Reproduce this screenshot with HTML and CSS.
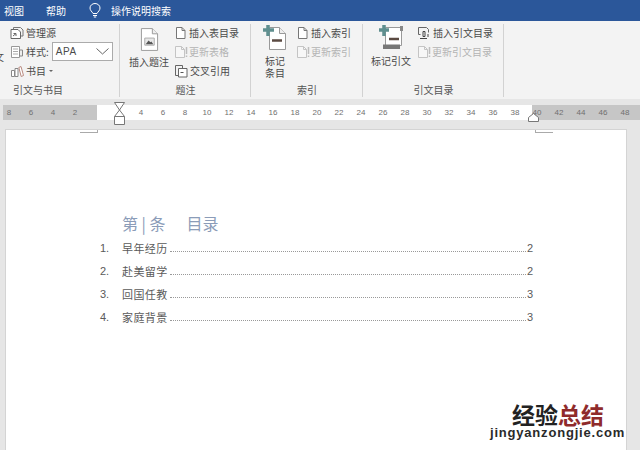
FILE: index.html
```html
<!DOCTYPE html>
<html lang="zh-CN">
<head>
    <meta charset="UTF-8">
    <title>目录</title>
    <link rel="stylesheet" href="styles.css">
</head>
<body>
    <svg class="defs" width="0" height="0">
        <symbol id="doc" viewBox="0 0 13 14">
            <path d="M2.500 1.500h5.500l3 3v8h-8.500z" fill="#fff" stroke="#777"/>
            <path d="M8 1.500v3h3" fill="none" stroke="#777"/>
        </symbol>
        <symbol id="doc-off" viewBox="0 0 14 14">
            <path d="M1.500 1.500h6l3 3v8h-9z" fill="#f7f7f7" stroke="#c4c4c4"/>
            <path d="M7.500 1.500v3h3" fill="none" stroke="#c4c4c4"/>
            <path d="M12.500 2v7M12.500 10.500v1.500" stroke="#bdbdbd" stroke-width="1.500"/>
        </symbol>
    </svg>

    <div class="titlebar">
        <span class="tab">视图</span>
        <span class="tab">帮助</span>
        <svg class="bulb" width="12" height="15" viewBox="0 0 12 15">
            <path d="M4 10.500C3 8.500 1 7.500 1 5a5 4.500 0 0 1 10 0c0 2.500-2 3.500-3 5.500z" fill="none" stroke="#fff"/>
            <path d="M4 12.500h4M4.800 14h2.400" stroke="#fff"/>
        </svg>
        <span class="search">操作说明搜索</span>
    </div>

    <div class="ribbon">
        <div class="group group-books">
            <div class="group-body">
                <span class="cut">文</span>
                <div class="col">
                    <div class="item">
                        <svg class="ic" width="14" height="14" viewBox="0 0 14 14">
                            <path d="M3.500 3.500v-2h7l2.500 2.500v6h-2" fill="none" stroke="#777"/>
                            <path d="M1 3.500h7l2.500 2.500v6.500H1z" fill="#fff" stroke="#666"/>
                            <path d="M3 10l3-2.500M6 10V7.500H3.500" fill="none" stroke="#666"/>
                        </svg>
                        管理源
                    </div>
                    <div class="item">
                        <svg class="ic" width="14" height="14" viewBox="0 0 14 14">
                            <path d="M1.500 1.500h8v11h-8z" fill="#fff" stroke="#999"/>
                            <path d="M3 4h5M3 6.500h5M3 9h5" stroke="#aaa"/>
                            <path d="M9.500 5h3v6h-3z" fill="#eee" stroke="#888"/>
                        </svg>
                        样式:
                        <div class="select">
                            <span>APA</span>
                            <svg width="13" height="7" viewBox="0 0 13 7"><path d="M.5.500l6 5.500 6-5.500" fill="none" stroke="#666"/></svg>
                        </div>
                    </div>
                    <div class="item">
                        <svg class="ic" width="14" height="14" viewBox="0 0 14 14">
                            <path d="M1.500 6.500h3v6h-3zM5 4.500h3v8H5z" fill="#fff" stroke="#888"/>
                            <path d="M8.800 3.500l2.200-1 2.500 9-2.300 1z" fill="#fff" stroke="#b98a80"/>
                        </svg>
                        书目
                        <span class="caret"></span>
                    </div>
                </div>
            </div>
            <div class="group-label">引文与书目</div>
        </div>

        <div class="group group-caption">
            <div class="group-body">
                <div class="big big-caption">
                    <svg width="19" height="25" viewBox="0 0 20 26">
                        <path d="M1.500 1.500h11.500l5.500 5.500v17.500h-17z" fill="#fff" stroke="#999"/>
                        <path d="M13 1.500V7h5.500" fill="#eee" stroke="#999"/>
                        <path d="M5 11.500h10v7.500H5z" fill="#e8e8e8" stroke="#aaa"/>
                        <path d="M6 18l3-4 2 2 1-1 2 3z" fill="#555"/>
                    </svg>
                    <span class="big-text">插入题注</span>
                </div>
                <div class="col">
                    <div class="item"><svg class="ic" width="13" height="14"><use href="#doc"/></svg>插入表目录</div>
                    <div class="item off"><svg class="ic" width="14" height="14"><use href="#doc-off"/></svg>更新表格</div>
                    <div class="item">
                        <svg class="ic" width="14" height="14" viewBox="0 0 14 14">
                            <path d="M1.500 1.500h7v3" fill="none" stroke="#666"/>
                            <path d="M1.500 1.500v10h3" fill="none" stroke="#666"/>
                            <path d="M4.500 4.500h8.500v8.500H4.500z" fill="#fff" stroke="#666"/>
                            <path d="M6.500 8.500h3" stroke="#555"/>
                        </svg>
                        交叉引用
                    </div>
                </div>
            </div>
            <div class="group-label">题注</div>
        </div>

        <div class="group group-index">
            <div class="group-body">
                <div class="big big-entry">
                    <svg width="25" height="27" viewBox="0 0 25 27">
                        <path d="M6.500 3.500h10l6 6v16h-16z" fill="#fff" stroke="#999"/>
                        <path d="M16.500 3.500v6h6" fill="#eee" stroke="#999"/>
                        <path d="M5 1v11M0 6h11" stroke="#5f8f8f" stroke-width="3.500"/>
                        <path d="M9 16.500h10" stroke="#5b4a42" stroke-width="2.500"/>
                    </svg>
                    <span class="big-text">标记<br>条目</span>
                </div>
                <div class="col">
                    <div class="item"><svg class="ic" width="13" height="14"><use href="#doc"/></svg>插入索引</div>
                    <div class="item off"><svg class="ic" width="14" height="14"><use href="#doc-off"/></svg>更新索引</div>
                </div>
            </div>
            <div class="group-label">索引</div>
        </div>

        <div class="group group-cite">
            <div class="group-body">
                <div class="big big-cite">
                    <svg width="27" height="27" viewBox="0 0 27 27">
                        <path d="M7.500 3.500h16v18h-16z" fill="#fff" stroke="#999"/>
                        <path d="M22 2h3v5h-3z" fill="#888"/>
                        <path d="M5 20.500h17v4.500H5z" fill="#777"/>
                        <path d="M6 1v11M1 6h10" stroke="#5f8f8f" stroke-width="3.500"/>
                        <path d="M11 15h10" stroke="#5b4a42" stroke-width="2.500"/>
                    </svg>
                    <span class="big-text">标记引文</span>
                </div>
                <div class="col">
                    <div class="item">
                        <svg class="ic" width="14" height="14" viewBox="0 0 14 14">
                            <path d="M1.500 1.500h8l2 2v3M3.500 8.500h-2v-7" fill="none" stroke="#666"/>
                            <path d="M6 5.500h2v5H6zM3 12.500h7" fill="none" stroke="#444"/>
                            <path d="M11 8v3" stroke="#444"/>
                        </svg>
                        插入引文目录
                    </div>
                    <div class="item off"><svg class="ic" width="14" height="14"><use href="#doc-off"/></svg>更新引文目录</div>
                </div>
            </div>
            <div class="group-label">引文目录</div>
        </div>
    </div>

    <div class="ruler-band">
        <div class="ruler">
            <div class="margin-left">
                <span>8</span><span>6</span><span>4</span><span>2</span>
            </div>
            <div class="ruler-body">
                <span>4</span><span>6</span><span>8</span><span>10</span><span>12</span><span>14</span>
                <span>16</span><span>18</span><span>20</span><span>22</span><span>24</span><span>26</span>
                <span>28</span><span>30</span><span>32</span><span>34</span><span>36</span><span>38</span>
            </div>
            <div class="margin-right">
                <span>40</span><span>42</span><span>44</span><span>46</span><span>48</span>
            </div>
        </div>
        <svg class="indent-left" width="11" height="23" viewBox="0 0 11 23">
            <path d="M.500.500h10L5.500 8z" fill="#fff" stroke="#777"/>
            <path d="M5.500 8l5 6.500v8H.500v-8z" fill="#fff" stroke="#777"/>
            <path d="M.500 14.500h10" stroke="#777"/>
        </svg>
        <svg class="indent-right" width="11" height="9" viewBox="0 0 11 9">
            <path d="M5.500.500l5 4v4H.500v-4z" fill="#fff" stroke="#777"/>
        </svg>
    </div>

    <div class="page-area">
        <div class="page">
            <span class="corner corner-left"></span>
            <span class="corner corner-right"></span>
            <div class="toc-title"><span>第 | 条</span><span class="toc-title-text">目录</span></div>
            <div class="toc-row"><span class="toc-num">1.</span><span class="toc-text">早年经历</span><span class="toc-dots"></span><span class="toc-page">2</span></div>
            <div class="toc-row"><span class="toc-num">2.</span><span class="toc-text">赴美留学</span><span class="toc-dots"></span><span class="toc-page">2</span></div>
            <div class="toc-row"><span class="toc-num">3.</span><span class="toc-text">回国任教</span><span class="toc-dots"></span><span class="toc-page">3</span></div>
            <div class="toc-row"><span class="toc-num">4.</span><span class="toc-text">家庭背景</span><span class="toc-dots"></span><span class="toc-page">3</span></div>
            <div class="stamp">
                <div class="stamp-cn">经验<em>总结</em></div>
                <div class="stamp-en">jingyanzongjie.com</div>
            </div>
        </div>
    </div>
</body>
</html>
```

FILE: styles.css
```css
* {
    box-sizing: border-box;
}

body {
    margin: 0;
    height: 450px;
    overflow: hidden;
    display: flex;
    flex-direction: column;
    background: #e6e6e6;
    color: #4a4a4a;
    font-family: "Noto Sans CJK SC", "Liberation Sans", sans-serif;
    font-size: 10px;
}

.defs {
    display: block;
    height: 0;
}

/* title bar */
.titlebar {
    height: 21px;
    display: flex;
    align-items: center;
    padding-left: 4px;
    background: #2b579a;
    color: #fff;
    line-height: 16px;
}

.tab {
    margin-right: 22px;
}

.bulb {
    margin-left: 1px;
    margin-right: 10px;
}

/* ribbon */
.ribbon {
    height: 78px;
    display: flex;
    background: #f3f3f3;
}

.group {
    display: flex;
    flex-direction: column;
    padding-top: 3px;
    position: relative;
}

.group::after {
    content: "";
    position: absolute;
    top: 3px;
    bottom: 2px;
    right: 0;
    width: 1px;
    background: #d2d2d2;
}

.group-books {
    width: 120px;
}

.group-caption {
    width: 131px;
}

.group-index {
    width: 112px;
}

.group-cite {
    width: 141px;
}

.group-body {
    height: 57px;
    display: flex;
}

.group-label {
    height: 17px;
    line-height: 17px;
    text-align: center;
    color: #555;
}

.group-books .group-label {
    text-align: left;
    padding-left: 13px;
}

.cut {
    width: 5px;
    flex-shrink: 0;
    padding-top: 25px;
    overflow: hidden;
    text-indent: -6px;
    white-space: nowrap;
}

.col {
    display: flex;
    flex-direction: column;
    margin-top: -1px;
}

.item {
    height: 19px;
    display: flex;
    align-items: center;
    white-space: nowrap;
}

.ic {
    flex-shrink: 0;
    margin-right: 2px;
}

.off {
    color: #b4b4b4;
}

.off .ic {
    margin-right: 1px;
}

.group-books .col {
    margin-left: 5px;
}

.select {
    width: 61px;
    height: 19px;
    margin-left: 3px;
    padding: 0 3px;
    display: flex;
    align-items: center;
    justify-content: space-between;
    background: #fff;
    border: 1px solid #ababab;
    font-family: "Liberation Sans", sans-serif;
    font-size: 10px;
    letter-spacing: .6px;
}

.caret {
    width: 0;
    height: 0;
    margin-left: 3px;
    border-left: 2px solid transparent;
    border-right: 2px solid transparent;
    border-top: 2px solid #666;
}

.big {
    display: flex;
    flex-direction: column;
    align-items: center;
}

.big-text {
    margin-top: 3px;
    line-height: 12px;
    text-align: center;
    white-space: nowrap;
}

.big-caption {
    width: 50px;
    margin-left: 4px;
    padding-top: 3px;
}

.big-caption .big-text {
    margin-top: 4px;
}

.big-entry {
    width: 40px;
    margin-left: 4px;
    margin-right: 1px;
}

.big-entry .big-text {
    margin-top: 4px;
}

.big-cite {
    width: 44px;
    margin-left: 6px;
    margin-right: 4px;
}

.big-cite .big-text {
    margin-top: 4px;
}

/* ruler */
.ruler-band {
    height: 30px;
    padding: 6px 0 0 3px;
    position: relative;
}

.ruler {
    height: 15px;
    display: flex;
    font-family: "Liberation Sans", sans-serif;
    font-size: 8px;
    line-height: 15px;
    color: #707070;
}

.ruler span {
    width: 22px;
    flex-shrink: 0;
    text-align: center;
}

.margin-left {
    width: 94px;
    padding-right: 11px;
    display: flex;
    justify-content: flex-end;
    background: #c6c6c6;
}

.ruler-body {
    width: 435px;
    padding-left: 33px;
    display: flex;
    background: #fff;
}

.margin-right {
    flex: 1;
    display: flex;
    background: #c6c6c6;
}

.margin-right span:first-child {
    margin-left: -6px;
}

.indent-left {
    position: absolute;
    left: 114px;
    top: 3px;
}

.indent-right {
    position: absolute;
    left: 528px;
    top: 14px;
}

/* document page */
.page-area {
    flex: 1;
    padding-left: 5px;
    padding-right: 13px;
}

.page {
    height: 100%;
    padding: 82px 93px 0 94px;
    position: relative;
    background: #fff;
    border-top: 1px solid #d4d4d4;
    border-left: 1px solid #d4d4d4;
    border-right: 1px solid #d4d4d4;
}

.corner {
    position: absolute;
    top: 0;
    width: 18px;
    height: 3px;
    border-bottom: 1px solid #aaa;
}

.corner-left {
    left: 74px;
    border-right: 1px solid #aaa;
}

.corner-right {
    left: 529px;
    border-left: 1px solid #aaa;
}

.toc-title {
    height: 22px;
    margin-left: 22px;
    margin-bottom: 2px;
    line-height: 22px;
    font-size: 16px;
    color: #8b9cb8;
    white-space: pre;
}

.toc-title-text {
    margin-left: 21px;
}

.toc-row {
    height: 23px;
    display: flex;
    align-items: center;
    font-size: 11px;
    color: #5a5a5a;
}

.toc-num {
    width: 22px;
    flex-shrink: 0;
    font-family: "Liberation Sans", sans-serif;
}

.toc-text {
    letter-spacing: .4px;
}

.toc-dots {
    flex: 1;
    height: 5px;
    margin: 3px 1px 0 2px;
    border-bottom: 1px dotted #999;
}

.toc-page {
    font-family: "Liberation Sans", sans-serif;
}

/* watermark */
.stamp {
    position: absolute;
    left: 484px;
    top: 272px;
    white-space: nowrap;
}

.stamp-cn {
    height: 24px;
    margin-left: 22px;
    font-size: 23px;
    line-height: 24px;
    font-weight: 700;
    color: #222;
}

.stamp-en {
    height: 14px;
    font-family: "Liberation Sans", sans-serif;
    font-size: 13px;
    line-height: 14px;
    font-weight: 700;
    letter-spacing: .8px;
    color: #2a2a2a;
}

.stamp-cn em {
    font-style: normal;
    color: #8f2b2b;
}
```
